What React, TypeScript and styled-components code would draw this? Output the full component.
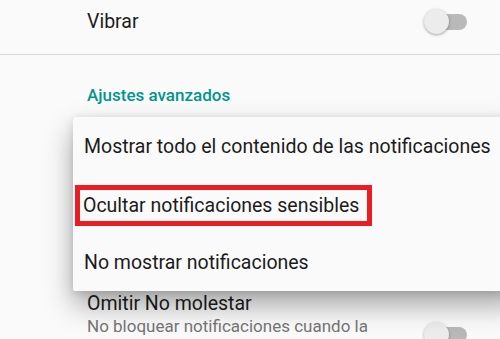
import React, { FC } from 'react'
import styled, { createGlobalStyle } from 'styled-components'

const GlobalStyle = createGlobalStyle`
  html, body {
    margin: 0;
    padding: 0;
    background: #fafafa;
  }
  body {
    font-family: Roboto, "Noto Sans", "Liberation Sans", sans-serif;
    color: #212121;
  }
`

const Screen = styled.div`
  position: relative;
  width: 500px;
  height: 339px;
  overflow: hidden;
  background: #fafafa;
`

const List = styled.div`
  display: flex;
  flex-direction: column;
  margin-top: -10px;
`

const Row = styled.div<{ $divider?: boolean; $height?: number }>`
  display: flex;
  align-items: center;
  justify-content: space-between;
  box-sizing: border-box;
  height: ${(p) => (p.$height ? `${p.$height}px` : 'auto')};
  padding: 16px 33px 16px 87px;
  border-bottom: ${(p) => (p.$divider ? '1px solid #d9d9d9' : 'none')};
`

const RowText = styled.div`
  display: flex;
  flex-direction: column;
  gap: 1px;
`

const Title = styled.div`
  font-size: 19.5px;
  line-height: 22px;
  color: #1c1c1c;
`

const Summary = styled.div`
  max-width: 295px;
  font-size: 17px;
  line-height: 20px;
  color: #757575;
`

const CategoryHeader = styled.div`
  padding: 30px 0 0 87px;
  height: 60px;
  box-sizing: border-box;
  font-size: 17px;
  line-height: 20px;
  font-weight: 500;
  color: #00968a;
`

const Toggle = styled.div`
  position: relative;
  width: 36px;
  height: 16px;
  border-radius: 8px;
  background: #b9b9b9;
  flex-shrink: 0;
`

const Thumb = styled.span`
  position: absolute;
  left: -7px;
  top: -5px;
  width: 25px;
  height: 25px;
  border-radius: 50%;
  background: #ececec;
  box-shadow: 0 1px 3px rgba(0, 0, 0, 0.35);
`

const Menu = styled.div`
  position: absolute;
  left: 73px;
  top: 117px;
  width: 450px;
  display: flex;
  flex-direction: column;
  background: #fafafa;
  border-radius: 2px;
  box-shadow: 0 14px 28px rgba(0, 0, 0, 0.34), 0 2px 8px rgba(0, 0, 0, 0.12);
`

const MenuItem = styled.div`
  display: flex;
  align-items: center;
  height: 58px;
  padding-left: 11px;
  font-size: 19.5px;
  color: #1c1c1c;
`

const Label = styled.span<{ $marked?: boolean }>`
  display: inline-block;
  white-space: nowrap;
  ${(p) =>
    p.$marked &&
    `
    border: 5px solid #ec1c24;
    padding: 4px 8px 4px 3px;
    margin-left: -9px;
    margin-top: 2px;
  `}
`

type SwitchRowProps = {
  title: string
  summary?: string
  height?: number
  divider?: boolean
}

const SwitchRow: FC<SwitchRowProps> = ({ title, summary, height, divider }) => (
  <Row $height={height} $divider={divider}>
    <RowText>
      <Title>{title}</Title>
      {summary && <Summary>{summary}</Summary>}
    </RowText>
    <Toggle>
      <Thumb />
    </Toggle>
  </Row>
)

const options = [
  'Mostrar todo el contenido de las notificaciones',
  'Ocultar notificaciones sensibles',
  'No mostrar notificaciones',
]

export default function App() {
  return (
    <Screen>
      <GlobalStyle />
      <List>
        <SwitchRow title="Vibrar" height={65} divider />
        <CategoryHeader>Ajustes avanzados</CategoryHeader>
        <SwitchRow
          title="En la pantalla de bloqueo"
          summary="Mostrar todo el contenido de las notificaciones"
          height={162}
        />
        <SwitchRow
          title="Omitir No molestar"
          summary="No bloquear notificaciones cuando la opción No molestar esté configurada en Solo prioridad"
        />
      </List>
      <Menu>
        {options.map((option, index) => (
          <MenuItem key={option}>
            <Label $marked={index === 1}>{option}</Label>
          </MenuItem>
        ))}
      </Menu>
    </Screen>
  )
}
